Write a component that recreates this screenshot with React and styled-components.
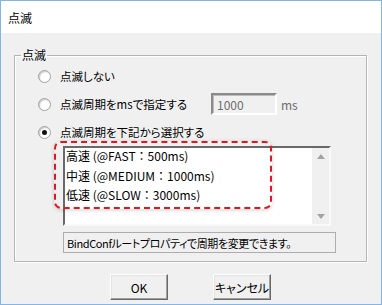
import React from 'react';
import styled, { createGlobalStyle } from 'styled-components';

const GlobalStyle = createGlobalStyle`
  html, body {
    margin: 0;
    padding: 0;
    background: #f0f0f0;
  }
  body {
    font-family: "Noto Sans CJK JP", "Noto Sans", sans-serif;
    font-size: 11.5px;
    font-feature-settings: "palt";
    color: #000;
  }
`;

const Window = styled.div`
  width: 382px;
  height: 305px;
  box-sizing: border-box;
  border: 1px solid #83b5e8;
  display: flex;
  flex-direction: column;
  background: #f0f0f0;
`;

const TitleBar = styled.div`
  height: 32px;
  flex: none;
  background: #fff;
  display: flex;
  align-items: center;
  padding-left: 7px;
  font-size: 12px;
`;

const Body = styled.div`
  flex: 1;
  display: flex;
  flex-direction: column;
  padding: 15px 14px 0 13px;
`;

const Group = styled.fieldset`
  margin: 0;
  padding: 0 0 8px 0;
  border: 1px solid #b4b4b4;
  box-shadow: inset 1px 1px 0 #fff, 1px 1px 0 #fff;
  min-width: 0;
`;

const Legend = styled.legend`
  margin-left: 6px;
  padding: 0 1px;
  font-size: 12px;
  line-height: 14px;
`;

const Options = styled.div`
  display: flex;
  flex-direction: column;
  padding: 0 0 0 23px;
`;

const Row = styled.div`
  display: flex;
  align-items: center;
  height: 28px;
`;

const Radio = styled.span`
  position: relative;
  width: 11px;
  height: 11px;
  border-radius: 50%;
  border: 1px solid #a2a2a2;
  background: radial-gradient(circle at 60% 60%, #fff 45%, #ececec 100%);
  box-shadow: inset 1px 1px 1px #c9c9c9;
  flex: none;
  display: flex;
  align-items: center;
  justify-content: center;

  &::after {
    content: '';
    display: ${({ checked }) => (checked ? 'block' : 'none')};
    width: 5px;
    height: 5px;
    border-radius: 50%;
    background: #111;
  }
`;

const Label = styled.span`
  margin-left: 9px;
  white-space: nowrap;
`;

const TextBox = styled.div`
  box-sizing: border-box;
  width: 66px;
  height: 22px;
  margin-left: ${({ offset }) => offset}px;
  padding-left: 4px;
  display: flex;
  align-items: center;
  font-size: 12px;
  background: #f0f0f0;
  color: #6d6d6d;
  border: 2px solid;
  border-color: #8a8a8a #fff #fff #8a8a8a;
  box-shadow: inset 1px 1px 0 #bcbcbc;
`;

const Unit = styled.span`
  margin-left: 4px;
  font-size: 12px;
  color: #6d6d6d;
`;

const Detail = styled.div`
  display: flex;
  flex-direction: column;
  gap: 6px;
  padding-left: 48px;
`;

const ListWrap = styled.div`
  position: relative;
  width: 268px;
  height: 80px;
`;

const ListBox = styled.div`
  box-sizing: border-box;
  width: 100%;
  height: 100%;
  display: flex;
  background: #fff;
  border: 2px solid;
  border-color: #696969 #f9f9f9 #f9f9f9 #696969;
`;

const Items = styled.div`
  flex: 1;
  display: flex;
  flex-direction: column;
  padding-left: 1px;
  font-size: 12px;
  font-feature-settings: normal;
`;

const Item = styled.div`
  height: 19.5px;
  line-height: 16px;
  white-space: nowrap;
`;

const ScrollBar = styled.div`
  width: 17px;
  background: #f0f0f0;
  display: flex;
  flex-direction: column;
  justify-content: space-between;
  align-items: center;
  padding: 6px 0 5px;
`;

const Arrow = styled.span`
  width: 0;
  height: 0;
  border-left: 4px solid transparent;
  border-right: 4px solid transparent;
  ${({ up }) =>
    up ? 'border-bottom: 5px solid #a3a3a3;' : 'border-top: 5px solid #a3a3a3;'}
`;

const Highlight = styled.div`
  position: absolute;
  left: -9px;
  top: -5px;
  width: 218px;
  height: 68px;
  box-sizing: border-box;
  border: 2px dashed #e8141c;
  border-radius: 7px;
  box-shadow: 0 1px 4px rgba(0, 0, 0, 0.18);
  pointer-events: none;
`;

const Status = styled.div`
  width: 268px;
  height: 19px;
  padding-left: 3px;
  display: flex;
  align-items: center;
  border: 1px solid #adadad;
  font-size: 11px;
  letter-spacing: -0.4px;
  white-space: nowrap;
`;

const Buttons = styled.div`
  display: flex;
  justify-content: center;
  gap: 45px;
  margin-top: 12px;
`;

const Button = styled.button`
  width: 58px;
  height: 26px;
  padding: 0;
  font-family: inherit;
  font-size: 12px;
  font-feature-settings: "palt";
  white-space: nowrap;
  color: #000;
  background: #f0f0f0;
  border: 1px solid;
  border-color: #fff #696969 #696969 #fff;
  box-shadow: inset -1px -1px 0 #a0a0a0, inset 1px 1px 0 #e3e3e3;
`;

export default function App() {
  return (
    <>
      <GlobalStyle />
      <Window>
        <TitleBar>点滅</TitleBar>
        <Body>
          <Group>
            <Legend>点滅</Legend>
            <Options>
              <Row>
                <Radio />
                <Label>点滅しない</Label>
              </Row>
              <Row>
                <Radio />
                <Label>点滅周期をmsで指定する</Label>
                <TextBox offset={24}>1000</TextBox>
                <Unit>ms</Unit>
              </Row>
              <Row>
                <Radio checked />
                <Label>点滅周期を下記から選択する</Label>
              </Row>
            </Options>
            <Detail>
              <ListWrap>
                <ListBox>
                  <Items>
                    <Item>高速 (@FAST：500ms)</Item>
                    <Item>中速 (@MEDIUM：1000ms)</Item>
                    <Item>低速 (@SLOW：3000ms)</Item>
                  </Items>
                  <ScrollBar>
                    <Arrow up />
                    <Arrow />
                  </ScrollBar>
                </ListBox>
                <Highlight />
              </ListWrap>
              <Status>BindConfルートプロパティで周期を変更できます。</Status>
            </Detail>
          </Group>
          <Buttons>
            <Button>OK</Button>
            <Button>キャンセル</Button>
          </Buttons>
        </Body>
      </Window>
    </>
  );
}
